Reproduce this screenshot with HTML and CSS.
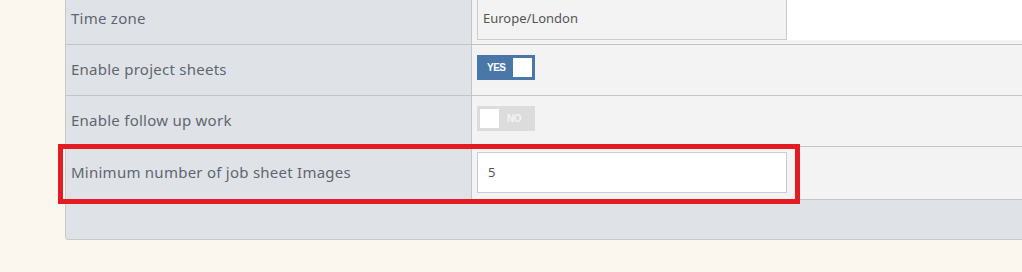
FILE: index.html
```html
<!DOCTYPE html>
<html lang="en">
<head>
  <meta charset="UTF-8">
  <title>Company settings</title>
  <link rel="stylesheet" href="styles.css">
</head>
<body>
  <div class="settings-panel">
    <div class="setting-row">
      <div class="setting-label">Time zone</div>
      <div class="setting-value">
        <div class="field-line">
          <input type="text" class="text-field is-disabled" value="Europe/London" disabled>
          <div class="field-fill"></div>
        </div>
      </div>
    </div>
    <div class="setting-row">
      <div class="setting-label">Enable project sheets</div>
      <div class="setting-value">
        <span class="switch is-on"><span class="switch-text">YES</span><span class="switch-knob"></span></span>
      </div>
    </div>
    <div class="setting-row">
      <div class="setting-label">Enable follow up work</div>
      <div class="setting-value">
        <span class="switch is-off"><span class="switch-knob"></span><span class="switch-text">NO</span></span>
      </div>
    </div>
    <div class="setting-row is-marked">
      <div class="setting-label">Minimum number of job sheet Images</div>
      <div class="setting-value">
        <input type="text" class="text-field" value="5">
      </div>
      <div class="highlight-box"></div>
    </div>
    <div class="panel-footer"></div>
  </div>
</body>
</html>
```

FILE: styles.css
```css
* {
  box-sizing: border-box;
  margin: 0;
  padding: 0;
}

body {
  background-color: #fbf7ee;
  font-family: 'Noto Sans', 'Open Sans', sans-serif;
  overflow: hidden;
}

.settings-panel {
  margin: -7px 0 0 65px;
  width: 980px;
  border: 1px solid #c9c9c9;
  border-radius: 0 0 3px 3px;
  background-color: #dfe3e7;
}

.setting-row {
  position: relative;
  display: flex;
  height: 51px;
  border-bottom: 1px solid #c4c4c4;
}

.setting-row.is-marked {
  height: 53px;
}

.setting-label {
  width: 406px;
  flex-shrink: 0;
  padding: 0 0 3px 5px;
  display: flex;
  align-items: center;
  border-right: 1px solid #c4c4c4;
  color: #5f6670;
  font-size: 15px;
  letter-spacing: 0.25px;
}

.setting-value {
  flex: 1;
  background-color: #f3f3f3;
  padding: 5px 0 0 5px;
}

.field-line {
  display: flex;
}

.field-fill {
  flex: 1;
  background-color: #fff;
}

.text-field {
  display: block;
  width: 310px;
  height: 41px;
  padding: 0 10px 2px;
  border: 1px solid #cccccc;
  background-color: #fff;
  color: #555;
  font-family: 'Noto Sans', 'Open Sans', sans-serif;
  font-size: 13px;
  outline: none;
}

.text-field.is-disabled {
  background-color: #f3f3f3;
  padding: 0 5px 4px;
}

.switch {
  display: flex;
  align-items: center;
  width: 58px;
  height: 25px;
  margin-top: 5px;
  padding: 0 3px;
  font-family: 'Liberation Sans', sans-serif;
  font-size: 10px;
  font-weight: bold;
  letter-spacing: -0.5px;
}

.switch.is-on {
  background-color: #4a77a8;
  color: #fff;
  justify-content: space-between;
  padding-left: 10px;
}

.switch.is-off {
  background-color: #dcdcdc;
  color: #f4f4f4;
  gap: 8px;
}

.switch-knob {
  width: 19px;
  height: 19px;
  background-color: #fff;
}

.panel-footer {
  height: 39px;
}

.highlight-box {
  position: absolute;
  left: -8px;
  top: -3px;
  width: 742px;
  height: 60px;
  border: 5px solid #e31b23;
  pointer-events: none;
}
```
